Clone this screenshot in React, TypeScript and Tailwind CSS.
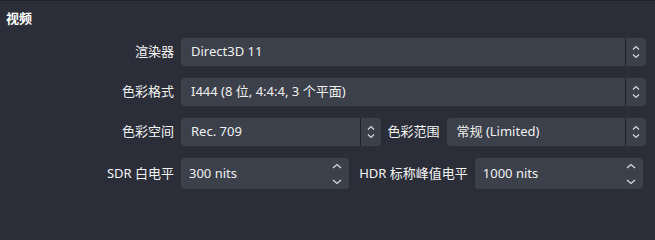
import React from 'react';

const font = { fontFamily: '"Noto Sans", "Noto Sans CJK SC", sans-serif' };

const ComboArrows: React.FC = () => (
    <svg width="8" height="14" viewBox="0 0 8 14" fill="none" stroke="#d8dae0" strokeWidth="1.2">
        <path d="M1 4.5 L4 1.5 L7 4.5" />
        <path d="M1 9.5 L4 12.5 L7 9.5" />
    </svg>
);

const SpinArrows: React.FC = () => (
    <svg width="10" height="22" viewBox="0 0 10 22" fill="none" stroke="#d8dae0" strokeWidth="1.3">
        <path d="M1 5 L5 1.5 L9 5" />
        <path d="M1 17 L5 20.5 L9 17" />
    </svg>
);

const Combo: React.FC<{ value: string; className?: string }> = ({ value, className = '' }) => (
    <div className={`flex h-[28px] items-stretch rounded-[4px] bg-[#3c404b] ${className}`}>
        <div className="flex flex-1 items-center truncate pl-[10px] text-[13px] text-[#f0f0f0]">{value}</div>
        <div className="w-px bg-[#1f212a]" />
        <div className="flex w-[20px] items-center justify-center">
            <ComboArrows />
        </div>
    </div>
);

const Spin: React.FC<{ value: string; className?: string }> = ({ value, className = '' }) => (
    <div className={`flex h-[31px] items-center rounded-[4px] bg-[#3c404b] ${className}`}>
        <div className="flex-1 pl-[8px] text-[13px] text-[#f0f0f0]">{value}</div>
        <div className="flex w-[24px] items-center justify-center">
            <SpinArrows />
        </div>
    </div>
);

const Label: React.FC<{ children: React.ReactNode; className?: string }> = ({ children, className = '' }) => (
    <div className={`whitespace-nowrap text-[13px] text-[#f5f5f5] ${className}`}>{children}</div>
);

export default function App() {
    return (
        <div style={font} className="h-[240px] w-[655px] overflow-hidden border-t border-[#1f212a] bg-[#2b2e38]">
            <div className="pl-[6px] pt-[8px] text-[13px] font-bold leading-[18px] text-white">视频</div>

            <div className="mt-[11px] flex flex-col gap-[12px] pr-[9px]">
                <div className="flex items-center">
                    <Label className="w-[174px] text-right">渲染器</Label>
                    <Combo value="Direct3D 11" className="ml-[7px] flex-1" />
                </div>
                <div className="flex items-center">
                    <Label className="w-[174px] text-right">色彩格式</Label>
                    <Combo value="I444 (8 位, 4:4:4, 3 个平面)" className="ml-[7px] flex-1" />
                </div>
                <div className="flex items-center">
                    <Label className="w-[174px] text-right">色彩空间</Label>
                    <Combo value="Rec. 709" className="ml-[7px] flex-1" />
                    <Label className="ml-[7px]">色彩范围</Label>
                    <Combo value="常规 (Limited)" className="ml-[7px] flex-1" />
                </div>
                <div className="flex items-center pr-[3px]">
                    <Label className="w-[174px] text-right">SDR 白电平</Label>
                    <Spin value="300 nits" className="ml-[7px] flex-1" />
                    <Label className="ml-[10px]">HDR 标称峰值电平</Label>
                    <Spin value="1000 nits" className="ml-[7px] flex-1" />
                </div>
            </div>
        </div>
    );
}
